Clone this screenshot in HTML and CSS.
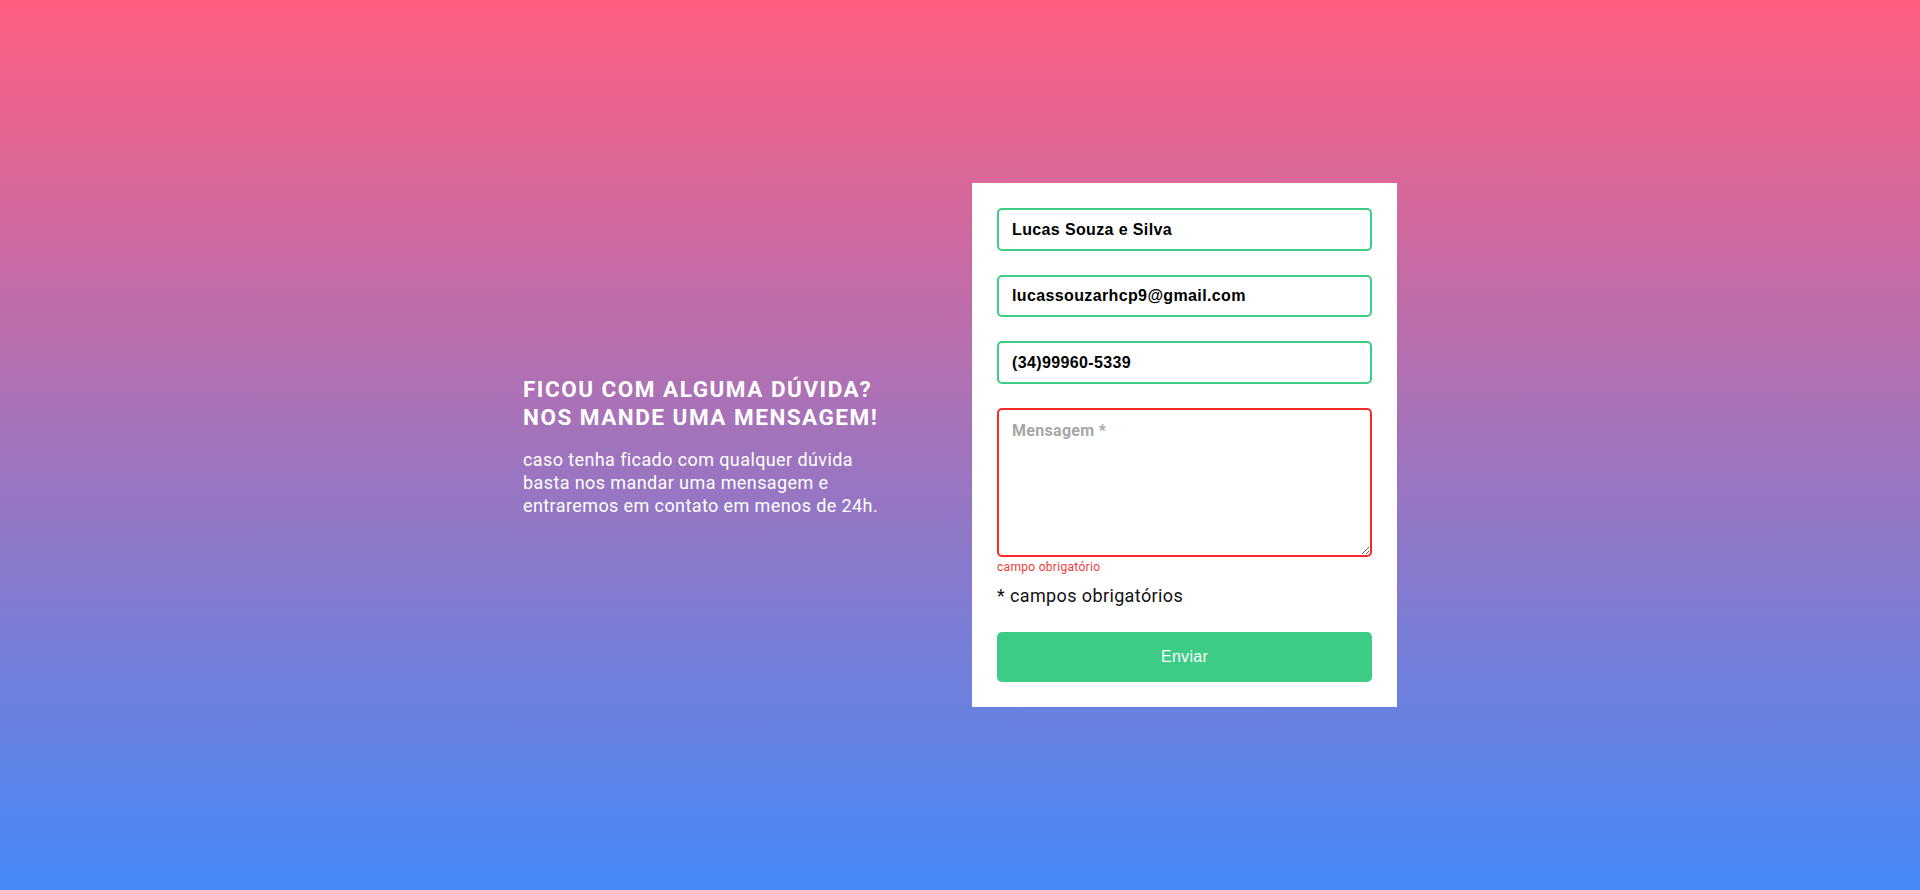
FILE: index.html
```html
<!DOCTYPE html>
<html lang="pt-BR">
<head>
<meta charset="utf-8">
<title>Contato</title>
<link rel="stylesheet" href="styles.css">
</head>
<body>
<main class="page">
  <section class="contact">
    <div class="intro">
      <h1 class="intro-title">FICOU COM ALGUMA DÚVIDA?<br>NOS MANDE UMA MENSAGEM!</h1>
      <p class="intro-text">caso tenha ficado com qualquer dúvida basta nos mandar uma mensagem e entraremos em contato em menos de 24h.</p>
    </div>
    <form class="card">
      <input class="field field-ok" type="text" value="Lucas Souza e Silva">
      <input class="field field-ok" type="email" value="lucassouzarhcp9@gmail.com">
      <input class="field field-ok" type="tel" value="(34)99960-5339">
      <textarea class="field field-area field-error" placeholder="Mensagem *"></textarea>
      <span class="error-msg">campo obrigatório</span>
      <p class="required-note">* campos obrigatórios</p>
      <button class="submit" type="button">Enviar</button>
    </form>
  </section>
</main>
</body>
</html>
```
FILE: styles.css
```css
* { box-sizing: border-box; }
html, body { margin: 0; padding: 0; }
body {
  height: 890px;
  background: linear-gradient(to bottom, #ff5e80 0%, #4489f8 100%);
  font-family: Roboto, "Liberation Sans", sans-serif;
}
.page {
  height: 100%;
  display: flex;
  align-items: center;
  justify-content: center;
}
.contact {
  display: grid;
  grid-template-columns: 425px 425px;
  column-gap: 24px;
  align-items: center;
}
.intro { color: #fff; max-width: 364px; padding-top: 2px; }
.intro-title {
  margin: 0 0 17px;
  font-size: 22.5px;
  line-height: 28px;
  font-weight: 700;
  letter-spacing: 1.5px;
  white-space: nowrap;
}
.intro-text {
  margin: 0;
  font-size: 18px;
  line-height: 23px;
  letter-spacing: 0.4px;
}
.card {
  background: #fff;
  padding: 25px;
  display: flex;
  flex-direction: column;
}
.field {
  display: block;
  width: 100%;
  height: 42.5px;
  margin: 0 0 24px;
  border: 2px solid #3ecb86;
  border-radius: 5px;
  padding: 0 13px;
  font-family: "Liberation Sans", Arial, sans-serif;
  font-weight: 700;
  font-size: 16px;
  letter-spacing: 0.37px;
  color: #000;
  background: #fff;
  outline: none;
}
.field-error { border-color: #f52a2a; }
.field-area {
  height: 149px;
  margin-bottom: 0;
  padding: 11px 13px;
  resize: vertical;
  font-family: Roboto, sans-serif;
  font-size: 16px;
  letter-spacing: 0.3px;
}
.field-area::placeholder { color: #a6a6a6; font-weight: 700; }
.error-msg {
  margin-top: 3px;
  font-size: 12px;
  line-height: 14px;
  letter-spacing: 0.3px;
  color: #f23c3c;
}
.required-note {
  margin: 11px 0 0;
  font-size: 18px;
  line-height: 21px;
  letter-spacing: 0.38px;
  color: #111;
}
.submit {
  margin-top: 26.5px;
  height: 49.5px;
  border: none;
  border-radius: 5px;
  background: #3ccc87;
  color: #fff;
  font-family: "Liberation Sans", Arial, sans-serif;
  font-size: 16px;
  letter-spacing: 0.3px;
  cursor: pointer;
}
```
